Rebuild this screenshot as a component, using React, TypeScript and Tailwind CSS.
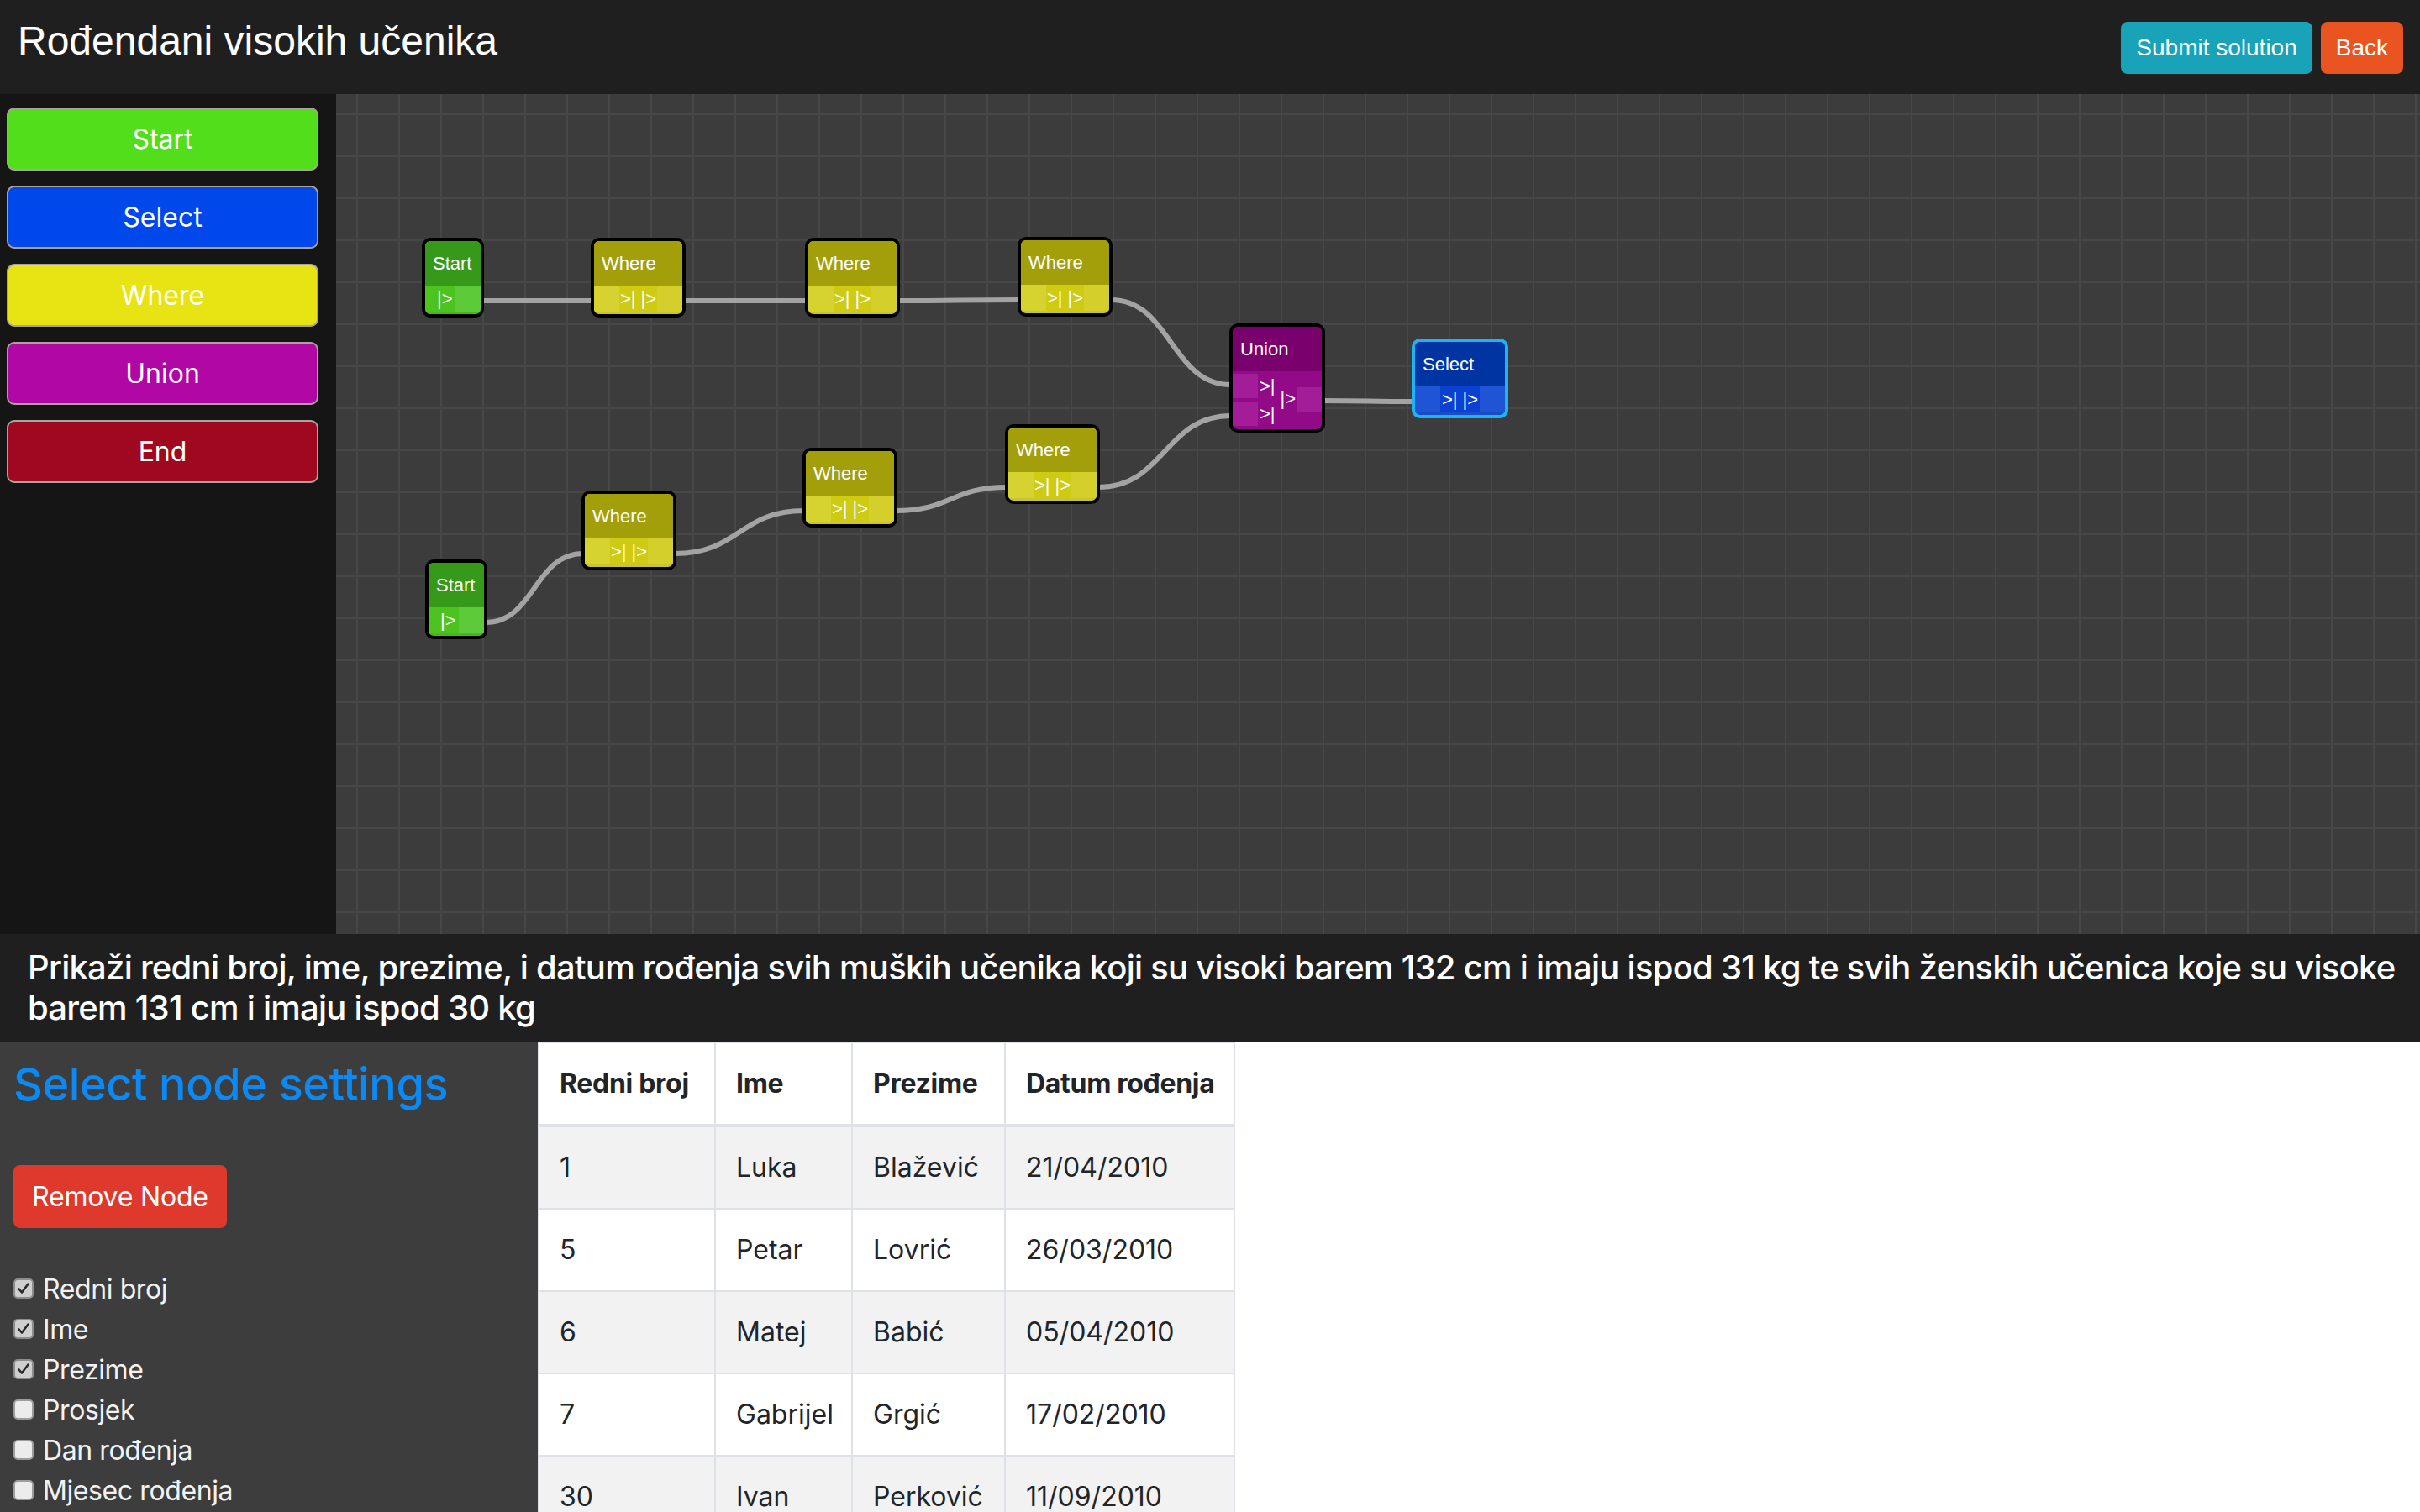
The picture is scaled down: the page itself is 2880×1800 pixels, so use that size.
import React from "react";

type Kind = "start" | "where" | "union" | "select";

const HELV = "font-['Liberation_Sans',Arial,sans-serif]";

const nodes: { kind: Kind; x: number; y: number }[] = [
  { kind: "start", x: 102, y: 171 },
  { kind: "where", x: 303, y: 171 },
  { kind: "where", x: 558, y: 171 },
  { kind: "where", x: 811, y: 170 },
  { kind: "union", x: 1063, y: 273 },
  { kind: "select", x: 1280, y: 291 },
  { kind: "start", x: 106, y: 554 },
  { kind: "where", x: 292, y: 472 },
  { kind: "where", x: 555, y: 421 },
  { kind: "where", x: 796, y: 393 },
];

const links: [number, number, number, number][] = [
  [174, 246, 305, 246],
  [414, 246, 560, 246],
  [669, 246, 813, 245],
  [922, 245, 1065, 346],
  [907, 468, 1065, 383],
  [1175, 365, 1282, 366],
  [178, 629, 294, 547],
  [403, 547, 557, 496],
  [666, 496, 798, 468],
];

function curve(x1: number, y1: number, x2: number, y2: number) {
  const dx = (x2 - x1) * 0.5;
  return `M${x1} ${y1} C${x1 + dx} ${y1} ${x2 - dx} ${y2} ${x2} ${y2}`;
}

function StartNode({ x, y }: { x: number; y: number }) {
  return (
    <div
      className={`absolute w-[74px] h-[95px] rounded-[10px] border-[4px] border-black bg-[#46b81c] overflow-hidden flex flex-col ${HELV}`}
      style={{ left: x, top: y }}
    >
      <div className="h-[53px] flex items-center pl-[9px] bg-[#36991a] text-white text-[22px]">Start</div>
      <div className="h-[34px] flex items-start">
        <div className="w-[36px] h-[31px] bg-[#4cc31f] flex items-center pl-[14px] text-white text-[22px] leading-none">|&gt;</div>
        <div className="w-[30px] h-[31px] bg-[#5cca39]" />
      </div>
    </div>
  );
}

function WhereLike({ x, y, kind }: { x: number; y: number; kind: "where" | "select" }) {
  const sel = kind === "select";
  return (
    <div
      className={`absolute ${sel ? "w-[115px] border-[#1cb4f2] bg-[#1a4bc8]" : "w-[113px] border-black bg-[#c9c52a]"} h-[95px] rounded-[10px] border-[4px] overflow-hidden flex flex-col ${HELV}`}
      style={{ left: x, top: y }}
    >
      <div className={`h-[53px] flex items-center pl-[9px] ${sel ? "bg-[#0034a2]" : "bg-[#a39f0b]"} text-white text-[22px]`}>
        {sel ? "Select" : "Where"}
      </div>
      <div className="h-[34px] flex items-start">
        <div className={`w-[30px] h-[31px] ${sel ? "bg-[#1f55d4]" : "bg-[#d6d22f]"}`} />
        <div className={`flex-1 h-[31px] ${sel ? "bg-[#0b40d0]" : "bg-[#cfca12]"} flex items-center justify-center text-white text-[22px] leading-none whitespace-nowrap`}>
          &gt;| |&gt;
        </div>
        <div className={`w-[30px] h-[31px] ${sel ? "bg-[#1f55d4]" : "bg-[#d4cf2b]"}`} />
      </div>
    </div>
  );
}

function UnionNode({ x, y }: { x: number; y: number }) {
  return (
    <div
      className={`absolute w-[114px] h-[130px] rounded-[10px] border-[4px] border-black bg-[#930a89] overflow-hidden flex flex-col ${HELV}`}
      style={{ left: x, top: y }}
    >
      <div className="h-[53px] flex items-center pl-[9px] bg-[#7a006e] text-white text-[22px]">Union</div>
      <div className="h-[69px] flex items-stretch pt-[3px] text-white text-[22px] leading-none">
        <div className="flex flex-col gap-[4px]">
          <div className="w-[30px] h-[29px] bg-[#a21d97]" />
          <div className="w-[30px] h-[29px] bg-[#a21d97]" />
        </div>
        <div className="flex flex-col gap-[4px] pl-[2px]">
          <div className="h-[29px] flex items-center">&gt;|</div>
          <div className="h-[29px] flex items-center">&gt;|</div>
        </div>
        <div className="flex items-center pl-[6px] pb-[6px]">|&gt;</div>
        <div className="flex items-center ml-auto pb-[6px]">
          <div className="w-[29px] h-[29px] bg-[#a21d97]" />
        </div>
      </div>
    </div>
  );
}

const paletteBtns = [
  { label: "Start", cls: "bg-[#52de1a]" },
  { label: "Select", cls: "bg-[#0047ec]" },
  { label: "Where", cls: "bg-[#e8e413]" },
  { label: "Union", cls: "bg-[#b107a5]" },
  { label: "End", cls: "bg-[#a00820]" },
];

const fields = [
  { label: "Redni broj", checked: true },
  { label: "Ime", checked: true },
  { label: "Prezime", checked: true },
  { label: "Prosjek", checked: false },
  { label: "Dan rođenja", checked: false },
  { label: "Mjesec rođenja", checked: false },
  { label: "Godina rođenja", checked: false },
];

const rows = [
  ["1", "Luka", "Blažević", "21/04/2010"],
  ["5", "Petar", "Lovrić", "26/03/2010"],
  ["6", "Matej", "Babić", "05/04/2010"],
  ["7", "Gabrijel", "Grgić", "17/02/2010"],
  ["30", "Ivan", "Perković", "11/09/2010"],
];

function Check({ checked }: { checked: boolean }) {
  return (
    <div
      className={`w-[24px] h-[24px] rounded-[5px] border-[2px] ${checked ? "border-[#8d8d8d] bg-[#cfcfcf]" : "border-[#9d9d9d] bg-[#ececec]"} flex items-center justify-center`}
    >
      {checked && (
        <svg width="16" height="16" viewBox="0 0 16 16">
          <path d="M2.5 8.5 L6 12.5 L13.5 2.5" fill="none" stroke="#2b2b2b" strokeWidth="2.6" strokeLinecap="round" strokeLinejoin="round" />
        </svg>
      )}
    </div>
  );
}

export default function App() {
  return (
    <div className="w-[2880px] h-[1800px] overflow-hidden flex flex-col bg-white font-['Inter','Noto_Sans',sans-serif]">
      {/* Header */}
      <header className="h-[112px] shrink-0 bg-[#1f1f1f] flex items-start justify-between">
        <h1 className={`${HELV} text-white text-[48px] leading-[56px] mt-[21px] ml-[21px]`}>Rođendani visokih učenika</h1>
        <div className={`flex gap-[10px] mt-[26px] mr-[20px] ${HELV}`}>
          <button className="h-[62px] px-[18px] rounded-[8px] bg-[#18a3b8] text-white text-[28px]">Submit solution</button>
          <button className="h-[62px] px-[18px] rounded-[8px] bg-[#ea5420] text-white text-[28px]">Back</button>
        </div>
      </header>

      {/* Main */}
      <div className="h-[1000px] shrink-0 flex">
        <aside className="w-[400px] bg-[#151515] flex flex-col gap-[18px] pt-[16px] pl-[8px]">
          {paletteBtns.map((b) => (
            <button
              key={b.label}
              className={`w-[371px] h-[75px] rounded-[9px] border-[2px] border-[#aaa39a] ${b.cls} text-white text-[32px]`}
            >
              {b.label}
            </button>
          ))}
        </aside>
        <div className="relative flex-1 overflow-hidden bg-[#3c3c3c] [background-image:linear-gradient(to_right,#474747_2px,transparent_2px),linear-gradient(to_bottom,#474747_2px,transparent_2px)] [background-size:50px_50px] [background-position:24px_23px]">
          <svg className="absolute inset-0 w-full h-full pointer-events-none">
            {links.map((l, i) => (
              <path key={i} d={curve(l[0], l[1], l[2], l[3])} fill="none" stroke="#a3a3a3" strokeWidth="6" />
            ))}
          </svg>
          {nodes.map((n, i) =>
            n.kind === "start" ? (
              <StartNode key={i} x={n.x} y={n.y} />
            ) : n.kind === "union" ? (
              <UnionNode key={i} x={n.x} y={n.y} />
            ) : (
              <WhereLike key={i} x={n.x} y={n.y} kind={n.kind} />
            )
          )}
        </div>
      </div>

      {/* Description */}
      <div className="shrink-0 bg-[#1f1f1f] px-[33px] py-[16px]">
        <h5 className="text-white text-[40px] leading-[48px] font-medium whitespace-nowrap tracking-[-0.75px]">
          Prikaži redni broj, ime, prezime, i datum rođenja svih muških učenika koji su visoki barem 132 cm i imaju ispod 31 kg te svih ženskih učenica koje su visoke
          <br />
          barem 131 cm i imaju ispod 30 kg
        </h5>
      </div>

      {/* Bottom */}
      <div className="flex-1 flex min-h-0">
        <div className="w-[640px] shrink-0 bg-[#3d3d3d] pl-[16px]">
          <h3 className="text-[#0b8af6] text-[54px] leading-[65px] font-medium mt-[18px] tracking-[-0.4px]">Select node settings</h3>
          <button className="mt-[64px] h-[75px] px-[22px] rounded-[8px] bg-[#df382c] text-white text-[32px] tracking-[-0.2px]">Remove Node</button>
          <div className="mt-[49px] flex flex-col">
            {fields.map((f) => (
              <div key={f.label} className="h-[48px] flex items-center gap-[11px] text-[#f2f2f2] text-[32px] tracking-[-0.4px]">
                <div className="pb-[3px]">
                  <Check checked={f.checked} />
                </div>
                <span className="leading-[48px]">{f.label}</span>
              </div>
            ))}
          </div>
        </div>
        <div className="shrink-0">
          <table className="table-fixed w-[828px] border-collapse text-[#212529] text-[32px]">
            <colgroup>
              <col className="w-[210px]" />
              <col className="w-[163px]" />
              <col className="w-[182px]" />
              <col className="w-[273px]" />
            </colgroup>
            <thead>
              <tr>
                {["Redni broj", "Ime", "Prezime", "Datum rođenja"].map((h) => (
                  <th
                    key={h}
                    className="text-left font-bold px-[24px] py-[24px] leading-[48px] border-[2px] border-b-[4px] border-[#dee2e6] whitespace-nowrap tracking-[-0.3px]"
                  >
                    {h}
                  </th>
                ))}
              </tr>
            </thead>
            <tbody>
              {rows.map((r, i) => (
                <tr key={i} className={i % 2 === 0 ? "bg-[#f2f2f2]" : "bg-white"}>
                  {r.map((c, j) => (
                    <td key={j} className="px-[24px] py-[24px] leading-[48px] border-[2px] border-[#dee2e6] whitespace-nowrap">
                      {c}
                    </td>
                  ))}
                </tr>
              ))}
            </tbody>
          </table>
        </div>
        <div className="flex-1 bg-white" />
      </div>
    </div>
  );
}
